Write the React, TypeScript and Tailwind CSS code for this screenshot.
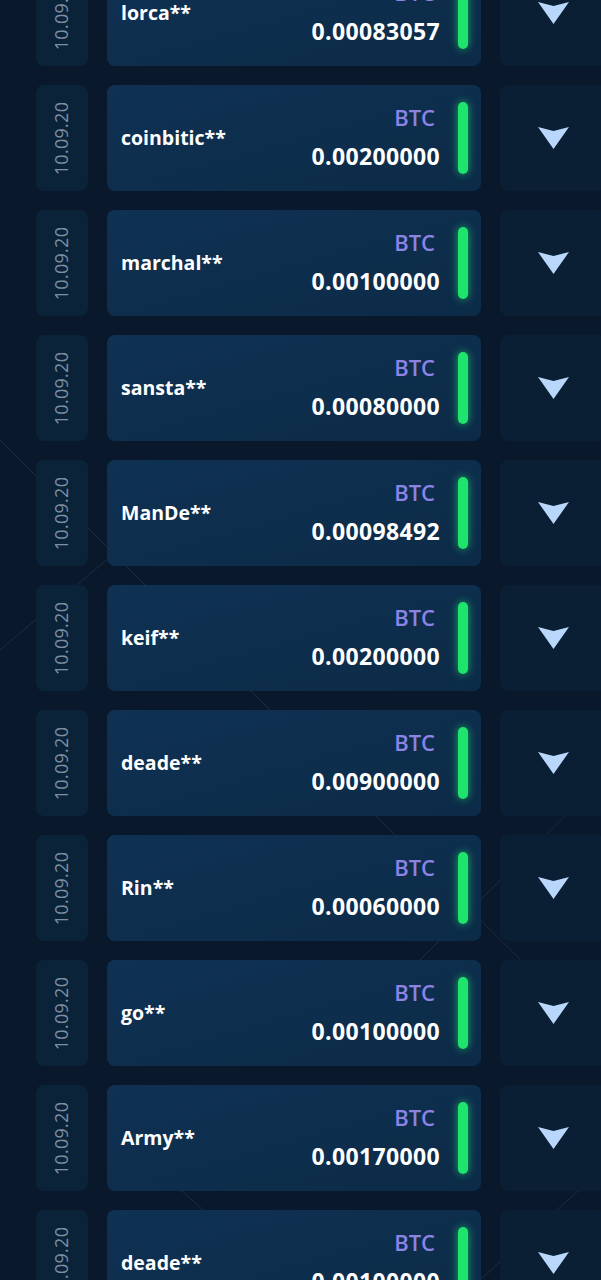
import React from "react";

const rows = [
  { name: "lorca**", amount: "0.00083057" },
  { name: "coinbitic**", amount: "0.00200000" },
  { name: "marchal**", amount: "0.00100000" },
  { name: "sansta**", amount: "0.00080000" },
  { name: "ManDe**", amount: "0.00098492" },
  { name: "keif**", amount: "0.00200000" },
  { name: "deade**", amount: "0.00900000" },
  { name: "Rin**", amount: "0.00060000" },
  { name: "go**", amount: "0.00100000" },
  { name: "Army**", amount: "0.00170000" },
  { name: "deade**", amount: "0.00100000" },
];

function Arrow() {
  return (
    <svg width="31" height="22" viewBox="0 0 31 22">
      <path d="M0 0 L15.5 4 L31 0 L15.5 22 Z" fill="#b8d7fb" />
    </svg>
  );
}

function Row({ name, amount }: { name: string; amount: string }) {
  return (
    <div className="flex h-[106px] shrink-0 gap-[19px]">
      <div className="flex h-full w-[52px] shrink-0 items-center justify-center rounded-[8px] bg-[#0b2338]">
        <span
          className="-rotate-90 whitespace-nowrap text-[18px] tracking-[0.3px] text-[#7e8fa3]"
          style={{ fontFamily: "'Open Sans', sans-serif" }}
        >
          10.09.20
        </span>
      </div>
      <div className="flex h-full w-[374px] shrink-0 items-center rounded-[8px] bg-gradient-to-br from-[#0f3152] to-[#0c2b48] pl-[14px] pr-[13px]">
        <div className="flex-1 text-[19.5px] font-bold text-white">{name}</div>
        <div className="mb-[3px] mr-[2px] flex flex-col items-end">
          <span className="mr-[5px] text-[22px] font-semibold leading-[26px] text-[#8c83e4]">BTC</span>
          <span className="mt-[13px] text-[23px] font-bold leading-[26px] tracking-[0.35px] text-white">{amount}</span>
        </div>
        <div className="ml-[16px] h-[72px] w-[10px] rounded-full bg-[#1ee36c] shadow-[0_0_8px_rgba(30,227,108,0.7)]" />
      </div>
      <div className="flex h-full w-[106px] shrink-0 items-center justify-center rounded-[8px] bg-[#0a1f34]">
        <Arrow />
      </div>
    </div>
  );
}

export default function App() {
  return (
    <div
      className="relative h-[1280px] w-[601px] overflow-hidden bg-[#09182a]"
      style={{ fontFamily: "'Open Sans', 'Noto Sans', sans-serif" }}
    >
      <svg className="absolute inset-0" width="601" height="1280">
        <g stroke="#6f93b8" strokeOpacity="0.18" strokeWidth="1">
          <line x1="0" y1="440" x2="360" y2="800" />
          <line x1="0" y1="650" x2="130" y2="540" />
          <line x1="170" y1="1180" x2="280" y2="1280" />
          <line x1="601" y1="1170" x2="480" y2="1280" />
          <line x1="360" y1="800" x2="601" y2="1040" />
          <line x1="601" y1="780" x2="420" y2="960" />
        </g>
      </svg>
      <div className="relative ml-[36px] mt-[-40px] flex flex-col gap-[19px]">
        {rows.map((r, i) => (
          <Row key={i} name={r.name} amount={r.amount} />
        ))}
      </div>
    </div>
  );
}
